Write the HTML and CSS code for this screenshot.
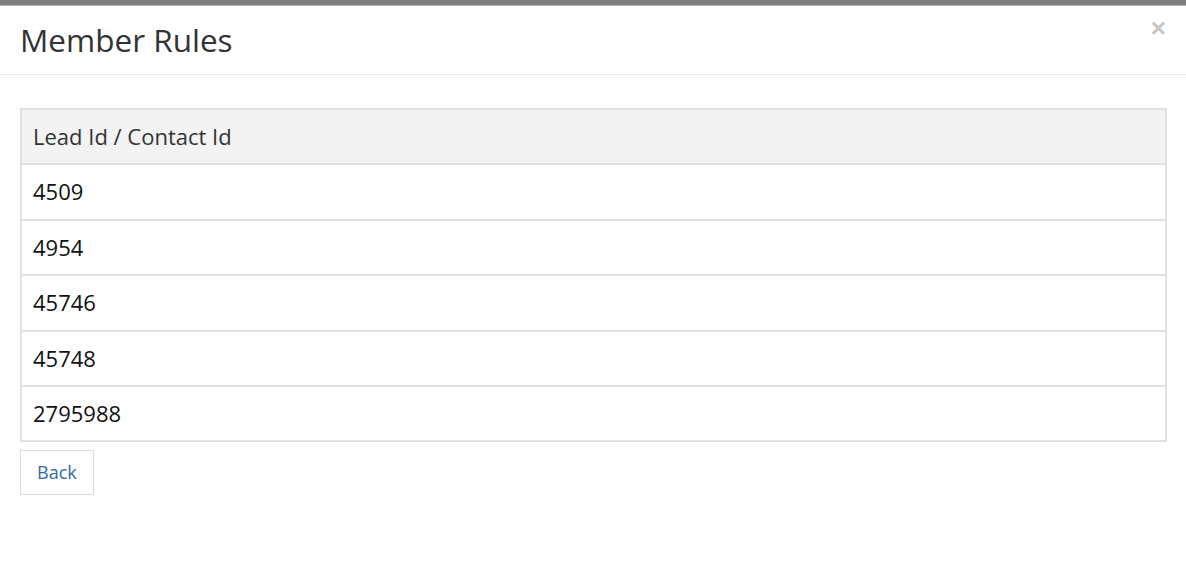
FILE: index.html
```html
<!DOCTYPE html>
<html>
<head>
<meta charset="utf-8">
<link rel="stylesheet" href="styles.css">
</head>
<body>
<div class="backdrop-strip"></div>
<div class="modal">
  <div class="modal-header">
    <h4 class="modal-title">Member Rules</h4>
    <button class="close" type="button">×</button>
  </div>
  <div class="modal-body">
    <table class="rules">
      <thead>
        <tr><th>Lead Id / Contact Id</th></tr>
      </thead>
      <tbody>
        <tr><td>4509</td></tr>
        <tr><td>4954</td></tr>
        <tr><td>45746</td></tr>
        <tr><td>45748</td></tr>
        <tr><td>2795988</td></tr>
      </tbody>
    </table>
    <button class="btn-back" type="button">Back</button>
  </div>
</div>
</body>
</html>
```
FILE: styles.css
```css
html, body {
  margin: 0;
  padding: 0;
  background: #fff;
  font-family: "Open Sans", "Liberation Sans", sans-serif;
  color: #222;
}
.backdrop-strip {
  height: 5px;
  background: #7e7e7e;
  border-bottom: 1px solid #b8b8b8;
}
.modal {
  position: relative;
}
.modal-header {
  padding: 12px 20px 12px 20px;
  border-bottom: 1px solid #e8e8e8;
}
.modal-title {
  margin: 0;
  font-size: 31.5px;
  line-height: 44px;
  font-weight: 400;
  color: #333;
}
.close {
  position: absolute;
  top: 7px;
  right: 20px;
  border: 0;
  background: transparent;
  padding: 0;
  font-family: "Liberation Sans", sans-serif;
  font-weight: bold;
  font-size: 26px;
  line-height: 30px;
  color: #c6c6c6;
}
.modal-body {
  padding: 33px 19px 20px 20px;
}
.rules {
  width: 100%;
  border-collapse: collapse;
  border: 2px solid #e0e0e0;
  font-size: 22px;
  line-height: 29.4px;
}
.rules th, .rules td {
  text-align: left;
  padding: 12px 11px 12px 11px;
  border-top: 2px solid #e0e0e0;
  font-weight: 400;
  color: #111;
}
.rules th {
  background: #f3f3f3;
  color: #333;
}
.btn-back {
  margin-top: 8px;
  display: block;
  background: #fff;
  border: 1px solid #dcdcdc;
  padding: 9px 16px 10px;
  font-family: "Open Sans", "Liberation Sans", sans-serif;
  font-size: 18px;
  line-height: 24px;
  color: #2f6ca3;
}
```
